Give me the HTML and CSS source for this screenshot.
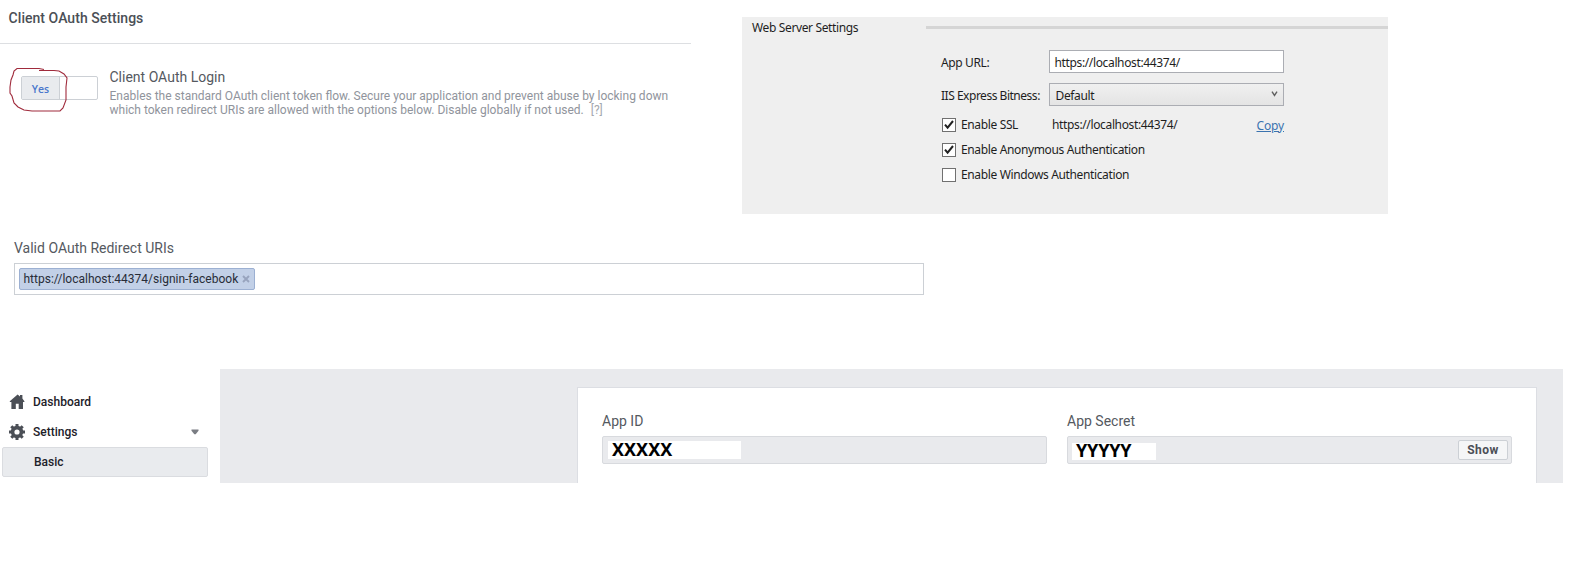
FILE: index.html
```html
<!DOCTYPE html>
<html lang="en">
<head>
<meta charset="utf-8">
<title>OAuth Settings</title>
<link rel="stylesheet" href="styles.css">
</head>
<body>
<div class="top">
  <section class="oauth">
    <h2 class="oauth-title">Client OAuth Settings</h2>
    <div class="oauth-row">
      <div class="toggle"><span class="toggle-yes">Yes</span>
        <svg class="mark" width="62" height="50" viewBox="0 0 62 50"><path d="M36 3.5 L31 2.5 L9 2.5 L6 5 L5 9 L3 14 L2 21 L2 27 L4 30 L6 37 L10 41 L16 44 L24 45 L52 45 L55 42 L58 34 L58 21 L59 12 L56 8 L51 5 L46 4.5 L31 4.5" fill="none" stroke="#a02b3c" stroke-width="1.1"/></svg>
      </div>
      <div class="oauth-copy">
        <div class="label">Client OAuth Login</div>
        <div class="desc"><span>Enables the standard OAuth client token flow. Secure your application and prevent abuse by locking down</span><br><span>which token redirect URIs are allowed with the options below. Disable globally if not used.</span><span class="help">[?]</span></div>
      </div>
    </div>
  </section>
  <section class="server">
    <div class="server-head"><span>Web Server Settings</span><i class="rule"></i></div>
    <div class="server-form">
      <div class="frow"><span class="flabel url">App URL:</span><div class="field"><span>https://localhost:44374/</span></div></div>
      <div class="frow second"><span class="flabel bitness">IIS Express Bitness:</span><div class="field select"><span>Default</span>
        <svg class="chev" width="7" height="6" viewBox="0 0 7 6"><path d="M1 .7 L3.5 4.5 L6 .7" fill="none" stroke="#606060" stroke-width="1.4"/></svg></div></div>
      <div class="crow"><span class="box"><svg width="12" height="12" viewBox="0 0 12 12"><path d="M2 5.6 L4.6 8.7 L10 2" fill="none" stroke="#222" stroke-width="2"/></svg></span><span class="ssl">Enable SSL</span><span>https://localhost:44374/</span><a class="copy">Copy</a></div>
      <div class="crow"><span class="box"><svg width="12" height="12" viewBox="0 0 12 12"><path d="M2 5.6 L4.6 8.7 L10 2" fill="none" stroke="#222" stroke-width="2"/></svg></span><span>Enable Anonymous Authentication</span></div>
      <div class="crow"><span class="box"></span><span>Enable Windows Authentication</span></div>
    </div>
  </section>
</div>
<section class="redirect">
  <div class="label">Valid OAuth Redirect URIs</div>
  <div class="tokens"><span class="token"><span>https://localhost:44374/signin-facebook</span><svg width="8" height="8" viewBox="0 0 8 8"><path d="M1 1 L7 7 M7 1 L1 7" stroke="#98a4be" stroke-width="1.9"/></svg></span></div>
</section>
<div class="bottom">
  <nav class="side">
    <div class="item"><svg width="16" height="16" viewBox="0 0 16 16"><path d="M8.6 .6 L11 2.6 V1 H13.4 V4.6 L15.4 7.2 V8 H14 V15 H9.7 V9.8 H6.8 V15 H2.4 V8 H.8 V7.2 Z" fill="#4b4f56"/></svg><span>Dashboard</span></div>
    <div class="item"><svg width="16" height="16" viewBox="0 0 16 16"><circle cx="8" cy="8" r="4.4" fill="none" stroke="#4b4f56" stroke-width="3.6"/><path d="M8 0V3M8 13V16M0 8H3M13 8H16M2.3 2.3L4.4 4.4M11.6 11.6L13.7 13.7M2.3 13.7L4.4 11.6M11.6 4.4L13.7 2.3" stroke="#4b4f56" stroke-width="3"/></svg><span>Settings</span><svg class="caret" width="8" height="6" viewBox="0 0 8 6"><path d="M.5 .5H7.5V1.8L4.7 5.2H3.3L.5 1.8Z" fill="#7a7d83"/></svg></div>
    <div class="active">Basic</div>
  </nav>
  <main class="canvas">
    <div class="card">
      <div class="col"><div class="label">App ID</div><div class="inp"><span class="patch id">XXXXX</span></div></div>
      <div class="col"><div class="label">App Secret</div><div class="inp"><span class="patch sec">YYYYY</span><button class="show">Show</button></div></div>
    </div>
  </main>
</div>
</body>
</html>
```
FILE: styles.css
```css
* { box-sizing: border-box; }
body { margin: 0; width: 1570px; height: 575px; overflow: hidden; background: #fff; font-family: Roboto, "Liberation Sans", sans-serif; display: flex; flex-direction: column; }
span { white-space: nowrap; }
svg { flex: none; display: block; }
.top { display: flex; height: 238px; }
.oauth { width: 691px; margin-right: 51px; }
.oauth-title { margin: 0; height: 44px; padding: 9px 0 0 8.6px; border-bottom: 1px solid #dddfe2; font-size: 14px; line-height: 18px; font-weight: 500; letter-spacing: .04px; color: #4b4f56; }
.oauth-row { display: flex; padding: 24px 0 0 21px; }
.toggle { position: relative; width: 77px; height: 24px; margin-top: 8px; border: 1px solid #ccd0d5; border-radius: 2px; display: flex; }
.toggle-yes { width: 38px; background: #e9ebee; border-right: 1px solid #ccd0d5; text-align: center; font: 600 10.5px/24px "Open Sans", sans-serif; color: #4a78cc; }
.mark { position: absolute; left: -14px; top: -11px; }
.oauth-copy { margin-left: 11.5px; }
.label { font-size: 14px; line-height: 18px; color: #55595f; }
.desc { margin-top: 3px; font-size: 12px; line-height: 14px; color: #90949c; }
.help { margin-left: 7px; color: #a5a8af; }
.server { width: 646px; height: 197px; margin-top: 17px; background: #efefef; font-family: "Noto Sans", "Open Sans", sans-serif; font-size: 12px; letter-spacing: -.36px; color: #1e1e1e; line-height: 16px; }
.server-head { display: flex; padding: 3px 0 0 10px; height: 33px; }
.server-head > span { width: 174px; }
.rule { flex: 1; height: 3px; margin-top: 6px; background: #d5d5d5; }
.server-form { padding-left: 199px; width: 542px; }
.frow { display: flex; align-items: center; height: 23px; }
.second { margin-top: 10px; }
.flabel { width: 108px; padding-top: 2px; }
.bitness { letter-spacing: -.48px; }
.field { width: 235px; height: 23px; background: #fff; border: 1px solid #abadb3; padding: 4px 5px 0 4.5px; }
.select { background: linear-gradient(#f0f0f0, #e4e4e4); display: flex; justify-content: space-between; padding-left: 5.5px; }
.chev { margin-top: 3px; }
.crow { display: flex; align-items: center; height: 25px; padding-left: 1px; }
.frow + .crow { margin-top: 6px; }
.box { width: 14px; height: 14px; border: 1px solid #707070; background: #fff; margin-right: 5px; }
.ssl { width: 91px; }
.copy { margin-left: auto; color: #3b73af; text-decoration: underline; padding-top: 2px; letter-spacing: -.15px; }
.redirect { padding-left: 14px; height: 131px; padding-top: 1px; }
.tokens { width: 910px; height: 32px; margin-top: 6px; border: 1px solid #ccd0d5; padding: 4px; }
.token { display: inline-flex; align-items: center; justify-content: space-between; width: 236px; height: 22px; padding: 0 4px 0 3.5px; background: #c2d0e7; border: 1px solid #9cb0d2; border-radius: 2px; font-size: 12px; color: #282d38; }
.bottom { display: flex; height: 114px; }
.side { width: 220px; padding: 18px 0 0 9px; font-size: 12px; font-weight: 500; color: #1d2129; }
.item { display: flex; align-items: center; height: 30px; padding-right: 21px; }
.item > span { margin-left: 8px; }
.caret { margin-left: auto; }
.active { margin-left: -7px; width: 206px; height: 30px; background: #e9ebee; border: 1px solid #dadce0; border-radius: 2px; padding-left: 31px; line-height: 28px; }
.canvas { width: 1343px; background: #e9eaed; padding: 18px 26px 0 357px; }
.card { height: 96px; background: #fff; border: 1px solid #dcdee3; border-bottom: 0; padding: 24px 24px 0; display: flex; gap: 20px; }
.col { width: 445px; }
.inp { display: flex; height: 28px; margin-top: 6px; background: #e9eaed; border: 1px solid #d8dade; border-radius: 2px; justify-content: space-between; }
.patch { background: #fff; height: 18px; margin: 4px 0 0 5px; padding-left: 4px; font: bold 18px/16px "Noto Sans", sans-serif; color: #000; }
.id { width: 133px; }
.sec { width: 84px; margin: 6px 0 0 4px; height: 17px; line-height: 14px; letter-spacing: -.2px; }
.show { width: 50px; height: 20px; margin: 3px 3px 0 0; padding: 0; background: #f5f6f7; border: 1px solid #ccd0d5; border-radius: 2px; font: bold 12px/18px Roboto, sans-serif; letter-spacing: .5px; color: #4b4f56; }
```
